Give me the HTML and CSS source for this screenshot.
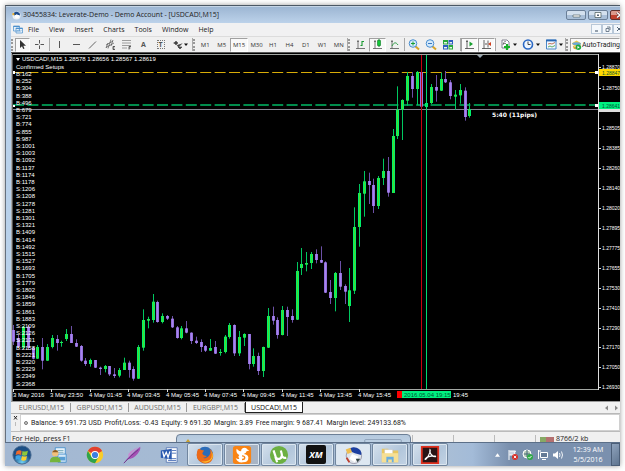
FILE: index.html
```html
<!DOCTYPE html>
<html lang="en">
<head>
<meta charset="utf-8">
<title>30455834: Leverate-Demo</title>
<link rel="stylesheet" href="styles.css">
</head>
<body>
<div class="desktop">
  <section class="window">
    <header class="titlebar">
      <svg class="app-icon" viewBox="0 0 10 10"><circle cx="5" cy="5" r="4.5" fill="#eef2f6"/><path d="M1 4a4.2 4.2 0 0 1 7.5-1.5L9 5 5 4 3 5z" fill="#1a4a8c"/><path d="M3 5l2-1 3 1-1 3H4z" fill="#fff"/><path d="M0 3l2-1 1 2-2 1z" fill="#e8b030"/></svg>
      <h1>30455834: Leverate-Demo - Demo Account - [USDCAD!,M15]</h1>
      <div class="caption">
        <button aria-label="Minimize"><svg viewBox="0 0 18 10"><path d="M6 5h7v2H6z" fill="#fff" stroke="#455" stroke-width=".6"/></svg></button>
        <button aria-label="Restore"><svg viewBox="0 0 18 10"><path d="M6 2.500h6v5H6z" fill="#fff" stroke="#455" stroke-width=".7"/><path d="M8 4.500h2v1.500H8z" fill="#567"/></svg></button>
        <button class="close" aria-label="Close"><svg viewBox="0 0 18 10"><path d="M6 2.500l6 5M12 2.500l-6 5" stroke="#633" stroke-width="2.600"/><path d="M6 2.500l6 5M12 2.500l-6 5" stroke="#fff" stroke-width="1.500"/></svg></button>
      </div>
    </header>
    <nav class="menubar">
      <svg class="menu-icon" viewBox="0 0 10 9"><path d="M.5 1h6v5h-6zM3 3h6.500v5H3z" fill="#e6f0fa" stroke="#5b9bd0" stroke-width=".8"/><path d="M.5 1.500h6M3 3.500h6.500" stroke="#4d90cc"/><path d="M4 6l1.500-1L7 6.500 8.500 5" stroke="#5b9bd0" stroke-width=".6" fill="none"/></svg>
      <a href="#">File</a><a href="#">View</a><a href="#">Insert</a><a href="#">Charts</a><a href="#">Tools</a><a href="#">Window</a><a href="#">Help</a>
      <div class="mdi">
        <button aria-label="Minimize chart"><svg viewBox="0 0 11 10"><path d="M4 7h3" stroke="#567" stroke-width="1.200"/></svg></button>
        <button aria-label="Restore chart"><svg viewBox="0 0 11 10"><path d="M5 3h3v3M4 4.500h3v3H4z" stroke="#567" stroke-width=".8" fill="none"/></svg></button>
        <button class="cut" aria-label="Close chart"><svg viewBox="0 0 11 10"><path d="M4 3l4 4M8 3L4 7" stroke="#567"/></svg></button>
      </div>
    </nav>
    <div class="toolbar">
      <i class="grip"></i>
      <button class="on cursor" aria-label="Cursor"><svg viewBox="0 0 17 15"><path d="M6 3v8l2-1.800 1.200 2.800 1.300-.6-1.200-2.700H12z" fill="#333"/></svg></button>
      <button class="cross" aria-label="Crosshair"><svg viewBox="0 0 17 15"><path d="M8.500 3v3.500m0 2V12M4 7.500h3.500m2 0H13" stroke="#555"/></svg></button>
      <i class="sep"></i>
      <button aria-label="Vertical line"><svg viewBox="0 0 17 15"><path d="M9.500 4v7" stroke="#555"/></svg></button>
      <button aria-label="Horizontal line"><svg viewBox="0 0 17 15"><path d="M6 7.500h7" stroke="#555"/></svg></button>
      <button aria-label="Trendline"><svg viewBox="0 0 17 15"><path d="M5 11.500l7-7" stroke="#666"/></svg></button>
      <button aria-label="Channel"><svg viewBox="0 0 17 15"><path d="M5 8l7-4M5 10.500l8-4.500M7 11.500l3-9M5 11l2-5M10 9l2-6" stroke="#555" stroke-width=".7"/><path d="M14 9.500h-2v3h2m-2-1.500h1.500" stroke="#222" stroke-width=".7" fill="none"/></svg></button>
      <button aria-label="Fibonacci"><svg viewBox="0 0 17 15"><path d="M4 3.500h9M4 6h9M4 8.500h9M4 11h5" stroke="#888" stroke-width=".8"/><path d="M13 9.500h-2v3m0-1.500h1.500" stroke="#222" stroke-width=".7" fill="none"/></svg></button>
      <button class="letter">A</button>
      <button class="letter boxed" aria-label="Text label"><span>T</span></button>
      <button class="wide" aria-label="Arrows"><svg viewBox="0 0 23 15"><path d="M5 6l2-2 2 2-2 2zM4 6h2" fill="#444" stroke="#444" stroke-width=".5"/><path d="M8 8l1.500 2L13 6.500M9 10l2 2 2-2z" fill="#444" stroke="#444" stroke-width=".7"/><path class="dd" d="M15 6.500h4L17 9z"/></svg></button>
      <i class="sep"></i><i class="grip"></i>
      <div class="frames">
        <button>M1</button><button>M5</button><button class="on">M15</button><button>M30</button><button>H1</button><button>H4</button><button>D1</button><button>W1</button><button>MN</button>
      </div>
      <i class="sep"></i><i class="grip"></i>
      <button aria-label="Bar chart"><svg viewBox="0 0 17 15"><path d="M6 3v9M4 11.500h9M5 4.500h2" stroke="#666" stroke-width=".9"/><path d="M10 4v5M10 4.500h2M8.500 8.500H10" stroke="#189a30" stroke-width="1.100"/></svg></button>
      <button class="on" aria-label="Candlesticks"><svg viewBox="0 0 17 15"><path d="M6 3v9M4 11.500h9M5 4.500h2" stroke="#666" stroke-width=".9"/><path d="M10 2v8" stroke="#087a20"/><path d="M8.500 3.500h3v5h-3z" fill="#12c838" stroke="#087a20" stroke-width=".6"/></svg></button>
      <button aria-label="Line chart"><svg viewBox="0 0 17 15"><path d="M6 3v9M4 11.500h9M5 4.500h2" stroke="#666" stroke-width=".9"/><path d="M6 9c2-4 4-4 6-1" stroke="#2a9a40" fill="none"/></svg></button>
      <i class="gap1"></i><i class="sep"></i>
      <button aria-label="Zoom in"><svg viewBox="0 0 17 15"><path d="M10 9l4 3.500" stroke="#d8a428" stroke-width="2"/><circle cx="8" cy="6.500" r="3.800" fill="#d3e9fb" stroke="#4a8ed0"/><path d="M8 4.500v4M6 6.500h4" stroke="#18a030"/></svg></button>
      <button aria-label="Zoom out"><svg viewBox="0 0 17 15"><path d="M10 9l4 3.500" stroke="#d8a428" stroke-width="2"/><circle cx="8" cy="6.500" r="3.800" fill="#d3e9fb" stroke="#4a8ed0"/><path d="M6 6.500h4" stroke="#3a78c0"/></svg></button>
      <button aria-label="Tile windows"><svg viewBox="0 0 17 15"><path d="M4 3h5v4.500H4zM9.500 8H14v4.500H9.500z" fill="#28a838"/><path d="M9.500 3H14v4.500H9.500zM4 8h5v4.500H4z" fill="#2c5cc0"/><path d="M5 5h3v1.500H5zM10.500 5H13v1.500h-2.500zM5 10h3v1.500H5zM10.500 10H13v1.500h-2.500z" fill="#e8f4e8"/></svg></button>
      <i class="gap4"></i><i class="sep"></i>
      <button class="on" aria-label="Auto scroll"><svg viewBox="0 0 17 15"><path d="M6 3v9M4 11.500h9M5 4.500h2" stroke="#555" stroke-width=".9"/><path d="M8.500 4.500v5L12 7z" fill="#18a030"/></svg></button>
      <button class="on" aria-label="Chart shift"><svg viewBox="0 0 17 15"><path d="M6 3v9M4 11.500h9M10 3.500v7" stroke="#555" stroke-width=".9"/><path d="M13 5v4l-3-2z" fill="#d04020"/><path d="M7 7h2" stroke="#555"/></svg></button>
      <i class="sep"></i>
      <button class="wide" aria-label="Indicators"><svg viewBox="0 0 23 15"><path d="M6 3h5l2 2v6H6z" fill="#fff" stroke="#667" stroke-width=".8"/><path d="M7 8c1-4 2-4 3-3M7 6.500h3" stroke="#555" fill="none" stroke-width=".7"/><path d="M11 7v6M8 10h6" stroke="#18b028" stroke-width="2.200"/><path class="dd" d="M17 6.500h4L19 9z"/></svg></button>
      <button class="wide" aria-label="Periods"><svg viewBox="0 0 23 15"><circle cx="9" cy="7.500" r="4.500" fill="#eef6ff" stroke="#2a68c4" stroke-width="1.600"/><path d="M9 4.500v3h2.500" stroke="#333" stroke-width=".9" fill="none"/><path class="dd" d="M17 6.500h4L19 9z"/></svg></button>
      <button class="wide" aria-label="Templates"><svg viewBox="0 0 23 15"><path d="M4.500 3h9.500v9H4.500z" fill="#f2f8ff" stroke="#4a88c8"/><path d="M4 3.500h10.500" stroke="#2a68b4" stroke-width="1.800"/><path d="M6 7l2-.5 2 .5 3-1.500" stroke="#b05030" fill="none" stroke-width=".8"/><path d="M6 10l2-1 2 1 3-1.500" stroke="#389a40" fill="none" stroke-width=".8"/><path class="dd" d="M17 6.500h4L19 9z"/></svg></button>
      <i class="sep"></i><i class="grip"></i>
      <button class="on auto"><svg viewBox="0 0 12 12"><path d="M1 4l5-3 5 3-1 3-4 1-4-2z" fill="#edc84a"/><path d="M1 4q5-2 10 0l-1 2H3z" fill="#6aa8d8"/><path d="M2 7l3 1 1 3-3-1z" fill="#d8a830"/><circle cx="8" cy="8.500" r="3" fill="#20a840"/><path d="M7 7l2.500 1.500L7 10z" fill="#fff"/></svg>AutoTrading</button>
    </div>
    <svg id="chart" class="chart" viewBox="11 53 609 349" role="img" aria-label="USDCAD 15 minute chart">
      <rect x="11" y="53" width="609" height="349" fill="#000"/>
      <path d="M11.500 53v349" stroke="#a8a8a8"/><path d="M12.500 54v348" stroke="#555"/>
      <path d="M13 54.500H598.500V389.500H13" fill="none" stroke="#a4a8a4"/>
      <path d="M598.500 54v336" stroke="#ddd"/>
      <path d="M11 401.500h609" stroke="#999"/>
      <path d="M13 72.500H598" stroke="#d8ac08" stroke-dasharray="11 3.400"/>
      <path d="M13 105H598" stroke="#008c4c" stroke-width="2" stroke-dasharray="11 3.400"/>
      <path d="M13 109.500H598" stroke="#858593"/>
      <g id="candles"></g>
      <path d="M421.500 55V389" stroke="#c80010"/>
      <path d="M426.500 55V389" stroke="#00d873"/>
      <path d="M477 55h6l-3 3z" fill="#9aa8b4"/>
      <path d="M16 58h4l-2 3z" fill="#fff"/>
      <path d="M13 71h2v3h-2zM13 105h2v2h-2zM595 71h3v3h-3zM595 104h3v3h-3z" fill="#fff"/>
      <text x="22" y="61">USDCAD!,M15</text><text x="64" y="61">1.28578 1.28656 1.28567 1.28619</text>
      <text x="16" y="69">Confirmed Setups</text>
      <text class="signal" x="492" y="117">5:40 (11pips)</text>
      <g id="setups"></g>
      <g id="axis"></g>
      <rect x="599" y="69" width="21" height="7" fill="#ffd800"/><text class="price dark" x="602" y="75">1.28847</text>
      <rect x="599" y="108" width="21" height="4" fill="#ddd"/>
      <rect x="599" y="102" width="21" height="7" fill="#00f080"/><text class="price dark" x="602" y="108">1.28641</text>
      <rect x="397" y="391" width="7" height="7" fill="#f00"/>
      <rect x="402" y="391" width="49" height="7" fill="#00f080"/><text class="dark" x="404" y="397">2016.05.04 19:15</text>
      <text x="453" y="397">19:45</text>
    </svg>
    <nav class="tabs">
      <a href="#">EURUSD!,M15</a><a href="#">GBPUSD!,M15</a><a href="#">AUDUSD!,M15</a><a href="#">EURGBP!,M15</a><a href="#" class="active">USDCAD!,M15</a>
      <svg class="arrows" viewBox="0 0 18 8"><path d="M6 1.500v5L3 4zM13 1.500v5L16 4z" fill="#888"/></svg>
    </nav>
    <div class="terminal">
      <button aria-label="Close terminal"><svg viewBox="0 0 8 14"><path d="M2 2l3 3.500M5 2L2 5.500" stroke="#222"/><path d="M3.500 8v4" stroke="#bbb"/></svg></button>
      <p><i class="dot"></i><span>Balance: 9 691.73 USD</span><span>Profit/Loss: -0.43</span><span>Equity: 9 691.30</span><span>Margin: 3.89</span><span>Free margin: 9 687.41</span><span>Margin level: 249133.68%</span></p>
    </div>
    <footer class="status">
      <span class="help">For Help, press F1</span>
      <div class="popup"><svg viewBox="0 0 6 4"><path d="M3 0l3 4H0z" fill="#c8a030"/></svg><i></i></div>
      <i class="cell"></i><i class="cell"></i><i class="cell"></i><i class="cell"></i>
      <svg class="signal-bars" viewBox="0 0 14 6"><path d="M1 0v6M3 0v6M5 0v6" stroke="#5a8a2a" stroke-width="1.400"/><path d="M7 0v6M9 0v6M11 0v6M13 0v6" stroke="#9a3a3a" stroke-width="1.400"/></svg>
      <span>8766/2 kb</span>
    </footer>
  </section>
  <footer class="taskbar">
    <button class="pin start" aria-label="Start"><svg viewBox="0 0 22 22"><defs><radialGradient id="orb" cy=".9"><stop offset="0" stop-color="#6fd0f4"/><stop offset="1" stop-color="#1c4f86"/></radialGradient></defs><circle cx="11" cy="11" r="10" fill="url(#orb)" stroke="#43668c"/><path d="M5 7q3-2 5.500-.5L10 11q-3-1.500-6 0z" fill="#ee6a2c"/><path d="M11.500 6.500q3 1.500 6-.2l-1 4.700q-3 1.500-5.500 0z" fill="#8fc83a"/><path d="M4 12q3-1.500 5.800 0l-.8 4.500q-3-1.500-5 0z" fill="#3fa4e4"/><path d="M11 12q3 1.500 5.500 0l-1 4.500q-3 1.500-5.500 0z" fill="#fbd02e"/></svg></button>
    <button class="pin" aria-label="Contacts"><svg viewBox="0 0 22 22"><path d="M8 3h11v9H8z" fill="#eaf4fc" stroke="#4a92cc"/><path d="M10 6h7M10 8h7" stroke="#7ab"/><path d="M11 10h9v9h-9z" fill="#d6e9f8" stroke="#4a92cc"/><path d="M12 13h7v4h-7z" fill="#5a9ed4"/><circle cx="8" cy="9" r="3.500" fill="#f2c07a"/><path d="M4.500 8q3.500-5 7 0z" fill="#8a5a20"/><path d="M2 19q0-6 6-6t6 6z" fill="#74b43c"/></svg></button>
    <button class="pin" aria-label="Chrome"><svg viewBox="0 0 22 22"><circle cx="11" cy="11" r="9" fill="#f8cc28"/><path d="M11 11L3.200 6.500A9 9 0 0 1 18.800 6.500z" fill="#e04030"/><path d="M3.200 6.500A9 9 0 0 0 11 20l4-7-8 0z" fill="#2fa34c"/><circle cx="11" cy="11" r="4.300" fill="#fff"/><circle cx="11" cy="11" r="3.400" fill="#3b7fe0"/></svg></button>
    <button class="pin" aria-label="Feather"><svg viewBox="0 0 22 22"><path d="M2 20Q8 11 20 2q1 3-3 8-4 5-11 6z" fill="#a552b4"/><path d="M2 20Q9 12 18 5" stroke="#6d2f88" fill="none"/><path d="M7 10q4-5 12-8-7 4-12 12z" fill="#c98ad2"/></svg></button>
    <button class="pin" aria-label="Word"><svg viewBox="0 0 22 22"><path d="M8 3h12v16H8z" fill="#fff" stroke="#5a7ab4"/><path d="M14 6h5M14 9h5M10 15h9M10 17h9" stroke="#4a70b8"/><path d="M2 6l12-2v12L2 14z" fill="#2a5ab0"/><path d="M4 7l1.500 6L8 8l2 5.500L12 7" stroke="#fff" stroke-width="1.400" fill="none"/></svg></button>
    <button class="task" aria-label="Firefox"><svg viewBox="0 0 22 22"><circle cx="11" cy="11" r="9" fill="#2b6cb8"/><path d="M3 5q-4 12 6 15 9 2 11-7 0-6-4-9 2 4 0 7-3 5-7 3 3 0 4-2-4 0-5-3l2-3Q6 6 5 4z" fill="#ec6a18"/><path d="M18 6q4 8-2 12-5 3-9 0 8 1 11-4 1-3 0-8z" fill="#fbc02c"/></svg></button>
    <button class="task warm" aria-label="UC Browser"><svg viewBox="0 0 22 22"><rect x="1" y="1" width="20" height="20" rx="3" fill="#f98414"/><path d="M5 4q3 3 5 3 0-4 4-4 2 0 3 2l2 1-3 1q0 2-3 3 5 1 5 4 0 5-6 5-6 1-8-5 2 2 4 1-2-2 0-4-4-2-3-7z" fill="#fff"/><path d="M11 12q3 0 3 2t-3 2" stroke="#f98414" stroke-width="1.500" fill="none"/></svg></button>
    <button class="task" aria-label="uTorrent"><svg viewBox="0 0 22 22"><circle cx="11" cy="11" r="10" fill="#6cb042"/><path d="M5 6l2 6q1 4 5 3 3-1 2-5l-1-4M14 11q1 4 5 3M7 13l2 6" stroke="#fff" stroke-width="2.400" fill="none"/></svg></button>
    <button class="task xm" aria-label="XM"><span>XM</span></button>
    <button class="task lit" aria-label="MetaTrader"><svg viewBox="0 0 22 22"><circle cx="12" cy="12" r="8.500" fill="#dfe4ea" stroke="#99a"/><path d="M6 6q3-5 9-3t5 8l-7-2z" fill="#1c3fa0"/><path d="M3 5l5-2 2 5-5 2z" fill="#eebe50"/><path d="M10 10l7 3-4 6-6-4z" fill="#fff"/><path d="M14 15l5 0-3 4z" fill="#344"/><path d="M4 14l3 5" stroke="#c04030" stroke-width="2"/></svg></button>
    <button class="task stack" aria-label="Explorer"><svg viewBox="0 0 22 22"><path d="M2 4h7l1 2h10v13H2z" fill="#e8c660"/><path d="M5 5h9v10H5z" fill="#fff" stroke="#bbb" stroke-width=".5"/><path d="M2 9h18v10H2z" fill="#f6df94"/><path d="M7 13h8v6h-2v-3H9v3H7z" fill="#69aee0"/></svg></button>
    <button class="task" aria-label="Acrobat"><svg viewBox="0 0 22 22"><path d="M2 2h18v18H2z" fill="#2a1414" stroke="#e0301e" stroke-width="2"/><path d="M11 5q-1 2 1 5t5 3q1-1-3-1-5 0-8 3-1 1 0 1 2-1 4-6 2-4 1-5z" stroke="#fff" stroke-width="1.200" fill="none"/></svg></button>
    <div class="tray">
      <svg class="up" viewBox="0 0 6 4"><path d="M3 0l3 4H0z" fill="#fff"/></svg>
      <svg viewBox="0 0 12 12"><path d="M2 1v10M2.500 2h6l-1 2 1 2h-6" stroke="#fff" fill="#cbd5e2"/><circle cx="8" cy="8" r="3" fill="#d83028"/><path d="M6.800 6.800l2.400 2.400m0-2.400L6.800 9.200" stroke="#fff" stroke-width=".9"/></svg>
      <svg viewBox="0 0 12 12"><circle cx="5" cy="5" r="4" fill="#b9cbb9" stroke="#fff"/><path d="M2 5h6M5 1v7" stroke="#467"/><circle cx="8" cy="8" r="3" fill="#2fa848"/><path d="M6.500 8l1 1.200L9.500 7" stroke="#fff" stroke-width=".9" fill="none"/></svg>
      <svg viewBox="0 0 12 12"><path d="M3.500 3.500h7v5h-7zM5 10.500h4" stroke="#fff" fill="#657b96"/><path d="M1.500 1v9M1 2h3" stroke="#fff"/></svg>
      <svg viewBox="0 0 12 12"><path d="M1 4.500h2L6 2v8L3 7.500H1z" fill="#fff"/><path d="M7.500 4q1 2 0 4M9.500 2.500q2 3.500 0 7" stroke="#fff" stroke-width=".9" fill="none"/></svg>
    </div>
    <time class="clock">12:39 AM<br>5/5/2016</time>
    <button class="peek" aria-label="Show desktop"></button>
  </footer>
</div>
<script src="chart.js"></script>
</body>
</html>
```
FILE: styles.css
```css
* { box-sizing: border-box; }
body { margin: 0; background: #fff; font-family: "Open Sans", "Noto Sans", sans-serif; font-size: 7px; line-height: 10px; color: #222; overflow: hidden; }
button { margin: 0; padding: 0; border: 0; background: none; font: inherit; color: inherit; display: flex; align-items: center; justify-content: center; }
a { color: inherit; text-decoration: none; }
svg { display: block; }
.desktop { margin: 5px; box-shadow: 0 0 5px #999; }
.window { border-top: 1px solid #4c5865; border-left: 1px solid #66707c; padding-left: 5px; background: #b9d1ea; }

.titlebar { display: flex; align-items: center; height: 17px; margin-left: -5px; padding-left: 6px; background: linear-gradient(#9db6d3, #bcd2ea); border-top: 1px solid #c5d5e6; }
.app-icon { width: 9px; height: 9px; margin-right: 2px; }
h1 { margin: 0; font-size: 7px; font-weight: 400; flex: 1; white-space: nowrap; }
.caption { display: flex; gap: 2px; overflow: hidden; width: 54px; }
.caption button { flex: 0 0 18px; height: 10px; border: 1px solid #6a7f98; border-radius: 2px; background: linear-gradient(#d3e0ee 50%, #a9bfd8 50%); }
.caption .close { background: linear-gradient(#dc9a8c 50%, #c0402c 50%); border-color: #60302c; }
.caption svg { width: 18px; height: 10px; flex: none; }

.menubar { display: flex; align-items: center; gap: 10px; height: 13px; padding-left: 2px; background: #f1f1f2; }
.menu-icon { width: 10px; height: 9px; margin-right: -5px; }
.mdi { display: flex; margin-left: auto; height: 100%; width: 29px; overflow: hidden; }
.mdi button { flex: 0 0 11px; min-width: 0; height: 10px; margin-top: 1px; border: 1px solid #b9c8d8; background: #f4f8fc; }
.mdi svg { width: 11px; height: 10px; flex: none; }

.toolbar { display: flex; align-items: center; height: 17px; background: #f0f0f0; border-top: 1px solid #dcdcdc; border-bottom: 1px solid #555; overflow: hidden; }
.toolbar button { flex: 0 0 17px; min-width: 0; height: 14px; }
.toolbar button > svg { width: 17px; height: 15px; flex: none; }
.toolbar .cursor { flex-basis: 15px; }
.toolbar .cross { flex-basis: 19px; }
.toolbar .wide { flex-basis: 23px; }
.toolbar .wide > svg { width: 23px; }
.toolbar .on { border: 1px solid #a0a0a0; border-right-color: #fff; border-bottom-color: #fff; background: #f9f9f9; }
.dd { fill: #111; }
.grip { flex: 0 0 4px; height: 12px; border-left: 2px dotted #999; }
.sep { flex: 0 0 1px; height: 13px; background: #a8a8a8; }
.gap1 { flex: 0 0 1px; }
.gap4 { flex: 0 0 4px; }
.letter { font-weight: 700; color: #555; }
.boxed span { border: 1px dotted #777; width: 8px; line-height: 7px; }
.frames { display: flex; flex: 0 0 150px; font-size: 6px; color: #333; }
.toolbar .frames button { flex: 1; }
.toolbar .auto { flex: 1 0 48px; justify-content: flex-start; font-family: Roboto, sans-serif; white-space: nowrap; }
.toolbar .auto > svg { width: 11px; height: 12px; }

.chart { width: 100%; height: auto; }
.chart text { font: 6px "Liberation Sans", sans-serif; fill: #fff; white-space: pre; }
.chart .price { font-size: 5px; }
.chart .dark { fill: #053; }
.chart .signal { font: bold 6px "DejaVu Sans", sans-serif; }

.tabs { display: flex; height: 12px; padding-left: 2px; background: #f0f0f0; border-bottom: 1px solid #b8b8b8; color: #6a6a6a; }
.tabs a { width: 58px; text-align: center; border-right: 1px solid #999; height: 9px; margin-top: 1px; }
.tabs .active { background: #fff; color: #111; border: 1px solid #222; border-top: 0; height: 11px; margin-top: 0; padding-top: 1px; }
.arrows { width: 18px; height: 8px; margin: 2px 0 0 auto; }

.terminal { display: flex; height: 18px; background: #f0f0f0; border-bottom: 1px solid #bbb; }
.terminal button { width: 9px; height: 14px; }
.terminal button svg { width: 8px; height: 14px; }
.terminal p { flex: 1; display: flex; align-items: center; gap: 3px; margin: 0; padding-left: 3px; background: #fff; border: 1px solid #d0d0d0; white-space: nowrap; font-family: Roboto, sans-serif; }
.dot { width: 4px; height: 4px; border: 1px solid #777; border-radius: 50%; background: #ccc; }

.status { display: flex; height: 10px; padding-left: 1px; background: #f0f0f0; overflow: hidden; line-height: 14px; }
.help { width: 164px; }
.popup { flex: 0 0 235px; height: 14px; margin-top: 2px; padding: 4px 8px; display: flex; justify-content: space-between; border: 1px solid #6c7f96; border-radius: 4px 4px 0 0; background: linear-gradient(#b4c8dd, #c3d5e7); }
.popup svg { width: 6px; height: 4px; }
.popup i { width: 38px; height: 4px; border: 1px solid #93a7be; border-radius: 2px; }
.cell { width: 41px; height: 8px; margin-top: 3px; border-right: 1px solid #bbb; }
.cell:nth-of-type(1) { width: 2px; }
.signal-bars { width: 14px; height: 6px; margin: 5px 2px 0 4px; }

.taskbar { display: flex; align-items: center; height: 24px; border-top: 1px solid #5b6f88; background: linear-gradient(90deg, #a3b8d2, #a9bed6 72%, #a3bbd8 76%, #7a90ae 82%); overflow: hidden; }
.pin { flex: 0 0 37px; height: 23px; }
.start { flex-basis: 34px; }
.taskbar svg { width: 20px; height: 20px; }
.task { flex: 0 0 36px; height: 23px; margin-right: 1px; border: 1px solid #71869f; border-radius: 2px; background: linear-gradient(135deg, #d4e0ec, #b2c6db 60%, #c3d3e4); box-shadow: inset 0 0 0 1px #dbe6f0; }
.warm { background: #a8b4c4; }
.lit { background: #dde7f1; }
.stack { margin-right: 4px; box-shadow: inset 0 0 0 1px #dbe6f0, 2px 0 #b4c6da, 3px 0 #71869f; }
.xm span { width: 20px; height: 19px; line-height: 19px; border-radius: 2px; background: #111; color: #fff; font-weight: 700; font-style: italic; font-size: 9px; }
.tray { display: flex; align-items: center; gap: 3px; margin-left: auto; }
.taskbar .tray svg { width: 12px; height: 12px; }
.taskbar .tray .up { width: 5px; height: 4px; margin-right: 4px; }
.clock { width: 46px; text-align: center; color: #fff; margin-left: 1px; }
.peek { flex: 0 0 9px; height: 23px; border: 1px solid #4c5f78; background: linear-gradient(135deg, #8fa3bc, #5f7590); }
```
FILE: chart.js
```js
const NS = "http://www.w3.org/2000/svg";
const add = (parent, tag, attrs, text) => {
  const el = document.createElementNS(NS, tag);
  for (const key in attrs) el.setAttribute(key, attrs[key]);
  if (text) el.textContent = text;
  parent.appendChild(el);
};

// Each candle: direction, high, body top, body bottom, low, in thirds of a unit below the base.
const runs = [
  [250, `d 225 240 275 285|d 255 265 290 295|u 228 230 293 297|d 225 230 293 300|d 290 293 326 328|u 285 291 326 326|d 264 291 332 358|u 282 291 332 332|u 255 264 291 295|d 255 267 279 302|u 272 276 279 290|u 237 252 267 273|d 228 252 279 279|d 268 279 290 291|d 285 288 332 335|d 324 332 342 348|u 326 330 342 350|d 330 330 353 354|d 350 353 357 375|u 345 348 357 367|d 348 348 373 378|d 354 373 378 384|u 354 360 377 382|u 323 338 360 360|d 332 338 360 383|d 349 357 386 392|u 285 291 386 387|u 178 210 293 302|u 200 207 212 235|u 132 155 210 218|d 152 156 216 218|u 190 198 216 220|d 195 198 206 210|d 198 206 232 234|d 228 232 264 266|u 228 235 264 268|d 213 235 248 250|d 248 248 273 282|d 260 272 279 282|d 268 276 291 306`],
  [230, `d 345 348 362 366|u 327 354 362 362|d 333 351 371 371|u 357 366 369 377|u 315 320 366 370|u 279 285 321 326|d 283 285 370 378|u 303 321 370 378|u 310 312 323 348|d 312 312 402 418|u 355 378 402 410|d 368 378 423 435|u 350 351 423 441|u 234 258 353 354|d 230 258 272 284|d 262 270 315 326|u 228 240 315 316|d 230 240 261 318|d 238 258 270 278|u 96 123 269 270|u 54 102 114 135|u 66 99 104 124|u 66 72 99 117|d 58 72 90 100|d 49 90 98 99|d 94 97 188 189|d 150 186 204 222|u 126 129 204 244|d 93 129 170 180|d 163 168 185 222|u 114 181 228 276`],
  [160, `u 142 201 392 402|u 72 99 201 260|u 33 64 101 170|d 38 63 75 132|d 56 75 138 159|u 48 54 138 147|u -4 33 54 75|d -9 33 98 110|u -93 -72 99 99`],
  [60, `u 79 149 228 237|u 118 120 149 240|u 36 48 122 137|d 36 48 87 113|u 33 36 87 135|d 33 36 140 142|u 120 129 141 143|u 72 81 129 132|d 45 81 92 125|u 38 57 92 93|d 33 57 67 69|d 60 67 108 118|u 90 104 110 149|u 72 90 106 131|d 82 92 171 182|u 129 147 168 173`]
];
const candles = document.getElementById("candles");
let index = 0;
for (const [base, rows] of runs) {
  for (const row of rows.split("|")) {
    const [dir, ...v] = row.split(" ");
    const [high, top, bottom, low] = v.map(n => base + n / 3);
    const x = Math.round(13.3 + 4.8 * index++);
    const up = dir === "u";
    add(candles, "rect", { x, y: high, width: 1, height: low - high, fill: up ? "#00c860" : "#6c50a6" });
    add(candles, "rect", { x: x - 1, y: top, width: 3, height: Math.max(1, bottom - top), fill: up ? "#00f06c" : "#9370db" });
    add(candles, "rect", { x, y: top, width: 1, height: Math.max(1, bottom - top), fill: up ? "#48dc28" : "#a884ee" });
  }
}

const setups = "B:162 B:252 B:304 B:388 B:496 B:679 S:721 B:774 S:855 B:987 S:1001 S:1003 B:1092 B:1137 B:1174 B:1178 S:1206 S:1208 S:1278 S:1281 B:1301 S:1321 B:1409 B:1414 B:1492 S:1515 S:1527 B:1693 B:1705 S:1779 S:1802 S:1846 S:1859 S:1861 B:1883 S:2109 S:2126 S:2131 B:2158 B:2221 B:2320 B:2329 S:2349 S:2368".split(" ");
const list = document.getElementById("setups");
setups.forEach((s, i) => add(list, "text", { x: 16, y: Math.round(76 + i * 7.2) }, s));

const axis = document.getElementById("axis");
const prices = { "1.28870": 67, "1.28750": 88, "1.28505": 128, "1.28385": 148, "1.28260": 168, "1.28140": 188, "1.28020": 208, "1.27895": 228, "1.27775": 248, "1.27655": 268, "1.27530": 288, "1.27410": 308, "1.27290": 328, "1.27170": 347, "1.27050": 367, "1.26930": 387 };
for (const p in prices) {
  add(axis, "rect", { x: 598, y: prices[p], width: 3, height: 1, fill: "#ddd" });
  add(axis, "text", { class: "price", x: 602, y: prices[p] + 2 }, p);
}
["3 May 2016", "3 May 23:50", "4 May 01:45", "4 May 03:45", "4 May 05:45", "4 May 07:45", "4 May 09:45", "4 May 11:45", "4 May 13:45", "4 May 15:45"].forEach((t, i) => {
  const x = Math.round(13 + i * 38.4);
  add(axis, "rect", { x, y: 389, width: 1, height: 3, fill: "#ddd" });
  add(axis, "text", { x: x - (i ? 1 : 0), y: 397 }, t);
});
```
